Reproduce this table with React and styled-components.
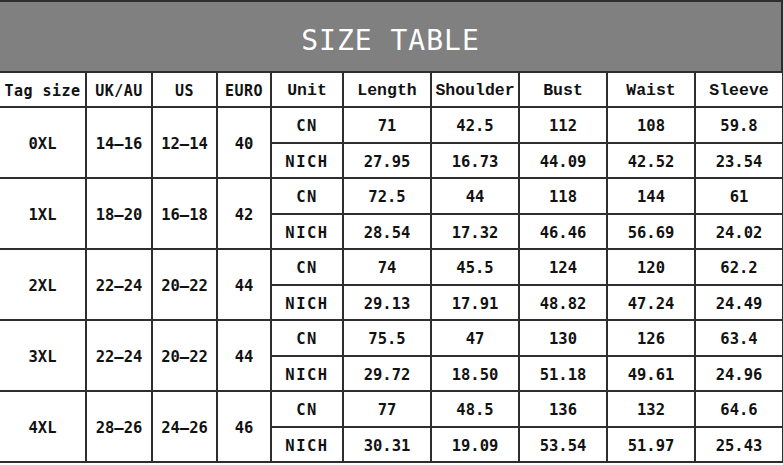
import styled, { createGlobalStyle } from "styled-components";

const GlobalStyle = createGlobalStyle`
  html, body {
    margin: 0;
    padding: 0;
    background: #fff;
  }
`;

const line = "2px solid #2e2e2e";

const columns = [86, 66, 65, 54, 72, 88, 88, 88, 88, 88];

const headers = [
  { label: "Tag size" },
  { label: "UK/AU" },
  { label: "US" },
  { label: "EURO" },
  { label: "Unit", serif: true },
  { label: "Length", serif: true },
  { label: "Shoulder", serif: true },
  { label: "Bust", serif: true },
  { label: "Waist", serif: true },
  { label: "Sleeve", serif: true },
];

const sizes = [
  { tag: "0XL", uk: "14–16", us: "12–14", euro: "40",
    cn: ["71", "42.5", "112", "108", "59.8"],
    inch: ["27.95", "16.73", "44.09", "42.52", "23.54"] },
  { tag: "1XL", uk: "18–20", us: "16–18", euro: "42",
    cn: ["72.5", "44", "118", "144", "61"],
    inch: ["28.54", "17.32", "46.46", "56.69", "24.02"] },
  { tag: "2XL", uk: "22–24", us: "20–22", euro: "44",
    cn: ["74", "45.5", "124", "120", "62.2"],
    inch: ["29.13", "17.91", "48.82", "47.24", "24.49"] },
  { tag: "3XL", uk: "22–24", us: "20–22", euro: "44",
    cn: ["75.5", "47", "130", "126", "63.4"],
    inch: ["29.72", "18.50", "51.18", "49.61", "24.96"] },
  { tag: "4XL", uk: "28–26", us: "24–26", euro: "46",
    cn: ["77", "48.5", "136", "132", "64.6"],
    inch: ["30.31", "19.09", "53.54", "51.97", "25.43"] },
];

const Sheet = styled.div`
  width: 783px;
  height: 465px;
  overflow: hidden;
  background: #fff;
`;

const Title = styled.div`
  height: 71px;
  border-top: ${line};
  border-right: ${line};
  background: #808080;
  display: flex;
  align-items: center;
  justify-content: center;
  color: #fff;
  font-family: "DejaVu Sans Mono", "Noto Sans CJK SC", monospace;
  font-size: 28px;
  letter-spacing: 1px;
  padding-top: 8px;
  box-sizing: border-box;
`;

const Table = styled.table`
  width: 783px;
  border-collapse: collapse;
  table-layout: fixed;
  color: #121212;
`;

const Head = styled.th`
  height: 31px;
  padding: 2px 0 0;
  border: ${line};
  font-family: ${(p) =>
    p.$serif
      ? `"Liberation Mono", "Courier New", monospace`
      : `"DejaVu Sans Mono", "Noto Sans CJK SC", monospace`};
  font-size: ${(p) => (p.$serif ? "16.5px" : "15px")};
  font-weight: bold;
  letter-spacing: ${(p) => (p.$serif ? "0" : "0.5px")};
  white-space: nowrap;
  text-align: center;
  &:first-child {
    border-left: none;
  }
`;

const Cell = styled.td`
  height: ${(p) => (p.$tall ? "32px" : "31px")};
  padding: 2px 0 0;
  border: ${line};
  font-family: "DejaVu Sans Mono", "Noto Sans CJK SC", monospace;
  font-size: 15.5px;
  font-weight: bold;
  letter-spacing: ${(p) => (p.$unit ? "1.5px" : "0")};
  text-align: center;
  white-space: nowrap;
  &.first {
    border-left: none;
  }
`;

function SizeGroup({ size }) {
  return (
    <>
      <tr>
        <Cell rowSpan={2} className="first">{size.tag}</Cell>
        <Cell rowSpan={2}>{size.uk}</Cell>
        <Cell rowSpan={2}>{size.us}</Cell>
        <Cell rowSpan={2}>{size.euro}</Cell>
        <Cell $tall $unit>CN</Cell>
        {size.cn.map((v, i) => (
          <Cell $tall key={i}>{v}</Cell>
        ))}
      </tr>
      <tr>
        <Cell $unit>NICH</Cell>
        {size.inch.map((v, i) => (
          <Cell key={i}>{v}</Cell>
        ))}
      </tr>
    </>
  );
}

export default function App() {
  return (
    <Sheet>
      <GlobalStyle />
      <Title>SIZE TABLE</Title>
      <Table>
        <colgroup>
          {columns.map((w, i) => (
            <col key={i} style={{ width: w }} />
          ))}
        </colgroup>
        <thead>
          <tr>
            {headers.map((h) => (
              <Head key={h.label} $serif={h.serif}>{h.label}</Head>
            ))}
          </tr>
        </thead>
        <tbody>
          {sizes.map((s) => (
            <SizeGroup key={s.tag} size={s} />
          ))}
        </tbody>
      </Table>
    </Sheet>
  );
}
